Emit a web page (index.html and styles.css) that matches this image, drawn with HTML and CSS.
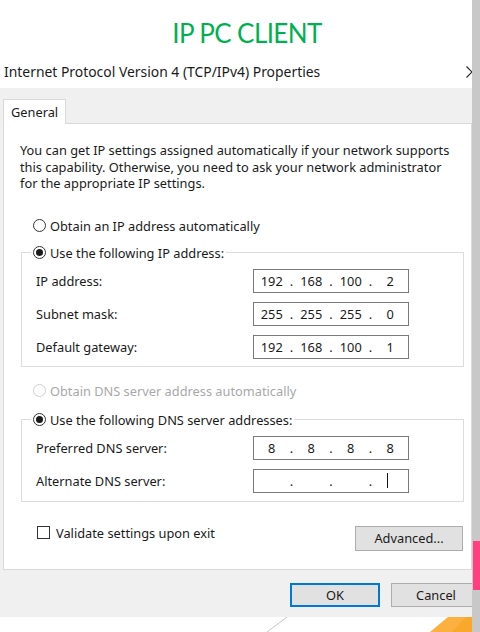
FILE: index.html
```html
<!DOCTYPE html>
<html>
<head>
<meta charset="utf-8">
<link rel="stylesheet" href="styles.css">
</head>
<body>
<div class="main">
  <div class="hero"><h1 class="hero-title">IP PC CLIENT</h1></div>
  <div class="dialog">
    <div class="titlebar">
      <span class="title-text">Internet Protocol Version 4 (TCP/IPv4) Properties</span>
      <svg class="close" width="12" height="12" viewBox="0 0 12 12"><path d="M0.5 0.5 L11.5 11.5 M11.5 0.5 L0.5 11.5" stroke="#2a2a2a" stroke-width="1.2" fill="none"/></svg>
    </div>
    <div class="dialog-body">
      <div class="tabs"><div class="tab">General</div></div>
      <div class="panel">
        <p class="desc">You can get IP settings assigned automatically if your network supports this capability. Otherwise, you need to ask your network administrator for the appropriate IP settings.</p>
        <div class="radio-row"><span class="radio"></span><span>Obtain an IP address automatically</span></div>
        <fieldset class="group group-ip">
          <legend class="legend"><span class="radio checked"></span><span>Use the following IP address:</span></legend>
          <div class="field-row"><span class="field-label">IP address:</span>
            <div class="ipbox"><span class="oct">192</span><span class="dot">.</span><span class="oct">168</span><span class="dot">.</span><span class="oct">100</span><span class="dot">.</span><span class="oct">2</span></div></div>
          <div class="field-row"><span class="field-label">Subnet mask:</span>
            <div class="ipbox"><span class="oct">255</span><span class="dot">.</span><span class="oct">255</span><span class="dot">.</span><span class="oct">255</span><span class="dot">.</span><span class="oct">0</span></div></div>
          <div class="field-row"><span class="field-label">Default gateway:</span>
            <div class="ipbox"><span class="oct">192</span><span class="dot">.</span><span class="oct">168</span><span class="dot">.</span><span class="oct">100</span><span class="dot">.</span><span class="oct">1</span></div></div>
        </fieldset>
        <div class="radio-row disabled dns-auto"><span class="radio"></span><span>Obtain DNS server address automatically</span></div>
        <fieldset class="group group-dns">
          <legend class="legend"><span class="radio checked"></span><span>Use the following DNS server addresses:</span></legend>
          <div class="field-row"><span class="field-label">Preferred DNS server:</span>
            <div class="ipbox"><span class="oct">8</span><span class="dot">.</span><span class="oct">8</span><span class="dot">.</span><span class="oct">8</span><span class="dot">.</span><span class="oct">8</span></div></div>
          <div class="field-row"><span class="field-label">Alternate DNS server:</span>
            <div class="ipbox"><span class="oct"></span><span class="dot">.</span><span class="oct"></span><span class="dot">.</span><span class="oct"></span><span class="dot">.</span><span class="oct"><span class="caret"></span></span></div></div>
        </fieldset>
        <div class="bottom-row">
          <label class="check-row"><span class="checkbox"></span><span>Validate settings upon exit</span></label>
          <button class="btn btn-adv">Advanced...</button>
        </div>
      </div>
      <div class="footer">
        <button class="btn btn-ok">OK</button>
        <button class="btn btn-cancel">Cancel</button>
      </div>
    </div>
    <svg class="deco" width="472" height="15" viewBox="0 0 472 15">
      <line x1="267" y1="15" x2="287" y2="0" stroke="#c4c4c4" stroke-width="1"/>
      <polygon points="430,15 448,0 472,0 472,15" fill="#fbb040"/>
      <polygon points="452,15 466,0 472,0 472,15" fill="#f8a92c"/>
    </svg>
  </div>
</div>
<div class="strip"><span class="pink"></span></div>
</body>
</html>
```

FILE: styles.css
```css
html, body {
  margin: 0;
  padding: 0;
}
body {
  display: flex;
  width: 480px;
  height: 632px;
  overflow: hidden;
  background: #ffffff;
  font-family: "Noto Sans", "Open Sans", sans-serif;
  font-size: 12.8px;
  color: #1a1a1a;
}
.main {
  width: 472px;
  flex: none;
  overflow: hidden;
  display: flex;
  flex-direction: column;
}
.strip {
  width: 8px;
  flex: none;
  background: #c8c8c8;
  position: relative;
}
.pink {
  position: absolute;
  left: 1px;
  right: 0;
  top: 541px;
  height: 49px;
  background: #ff3f80;
}
.hero {
  height: 55px;
  box-sizing: border-box;
  padding-left: 22px;
  text-align: center;
}
.hero-title {
  margin: 0;
  padding-top: 15px;
  font-family: Lato, "Noto Sans", sans-serif;
  font-weight: 400;
  font-size: 26px;
  letter-spacing: -0.6px;
  line-height: 36px;
  color: #00b050;
}
.titlebar {
  height: 33px;
  display: flex;
  align-items: center;
  justify-content: space-between;
  padding-left: 4px;
  background: #ffffff;
}
.title-text {
  font-size: 13.9px;
  color: #1a1a1a;
}
.close {
  display: block;
  flex: none;
  margin-right: -6px;
  margin-top: 1px;
}
.dialog-body {
  background: #f0f0f0;
  padding-left: 3px;
}
.tabs {
  padding-top: 11px;
  display: flex;
}
.tab {
  width: 63px;
  height: 25px;
  box-sizing: border-box;
  background: #ffffff;
  border: 1px solid #d9d9d9;
  border-bottom: none;
  padding-left: 7px;
  line-height: 24px;
  margin-bottom: -1px;
  position: relative;
}
.panel {
  background: #ffffff;
  border: 1px solid #d9d9d9;
  height: 447px;
  box-sizing: border-box;
}
.desc {
  margin: 0;
  padding: 18px 14px 0 16px;
  line-height: 16.5px;
}
.radio-row {
  display: flex;
  align-items: center;
  height: 20px;
  margin-top: 24px;
  padding-left: 29px;
  gap: 4px;
}
.radio {
  width: 13px;
  height: 13px;
  box-sizing: border-box;
  border: 1px solid #333;
  border-radius: 50%;
  display: inline-flex;
  align-items: center;
  justify-content: center;
  flex: none;
  background: #fff;
}
.radio.checked::after {
  content: "";
  width: 7px;
  height: 7px;
  border-radius: 50%;
  background: #1a1a1a;
}
.disabled {
  color: #a8a8a8;
}
.disabled .radio {
  border-color: #cfcfcf;
}
.group {
  margin: 0 7px 0 17px;
  padding: 6px 0 7px 0;
  border: 1px solid #dcdcdc;
  min-width: 0;
}
.group-ip {
  margin-top: 7px;
}
.legend {
  display: flex;
  align-items: center;
  gap: 4px;
  height: 20px;
  margin-left: 9px;
  padding: 0 2px;
}
.field-row {
  display: flex;
  align-items: center;
  justify-content: space-between;
  height: 24px;
  padding: 0 54px 0 14px;
}
.field-row + .field-row {
  margin-top: 9px;
}
.ipbox {
  width: 156px;
  height: 24px;
  box-sizing: border-box;
  border: 1px solid #7a7a7a;
  display: flex;
  align-items: center;
  background: #fff;
}
.oct {
  flex: 1;
  text-align: center;
  display: flex;
  justify-content: center;
  align-items: center;
}
.dot {
  width: 4px;
  text-align: center;
}
.caret {
  display: block;
  width: 1px;
  height: 15px;
  background: #111;
  margin-left: -6px;
}
.dns-auto {
  margin-top: 14px;
}
.group-dns {
  margin-top: 9px;
  padding-bottom: 8px;
}
.bottom-row {
  display: flex;
  justify-content: space-between;
  align-items: flex-start;
  margin: 24px 8px 0 33px;
}
.check-row {
  display: flex;
  align-items: center;
  gap: 6px;
  height: 14px;
}
.checkbox {
  width: 13px;
  height: 13px;
  box-sizing: border-box;
  border: 1px solid #333;
  background: #fff;
}
.btn {
  font-family: inherit;
  font-size: 12.8px;
  color: #1a1a1a;
  background: #e1e1e1;
  border: 1px solid #adadad;
  height: 25px;
  padding: 0;
  box-sizing: border-box;
}
.btn-adv {
  width: 108px;
}
.footer {
  display: flex;
  gap: 11px;
  padding: 13px 0 10px 287px;
}
.btn-ok, .btn-cancel {
  width: 90px;
  height: 24px;
  flex: none;
}
.btn-ok {
  border: 2px solid #0078d7;
}
.deco {
  display: block;
  flex: none;
}
```
